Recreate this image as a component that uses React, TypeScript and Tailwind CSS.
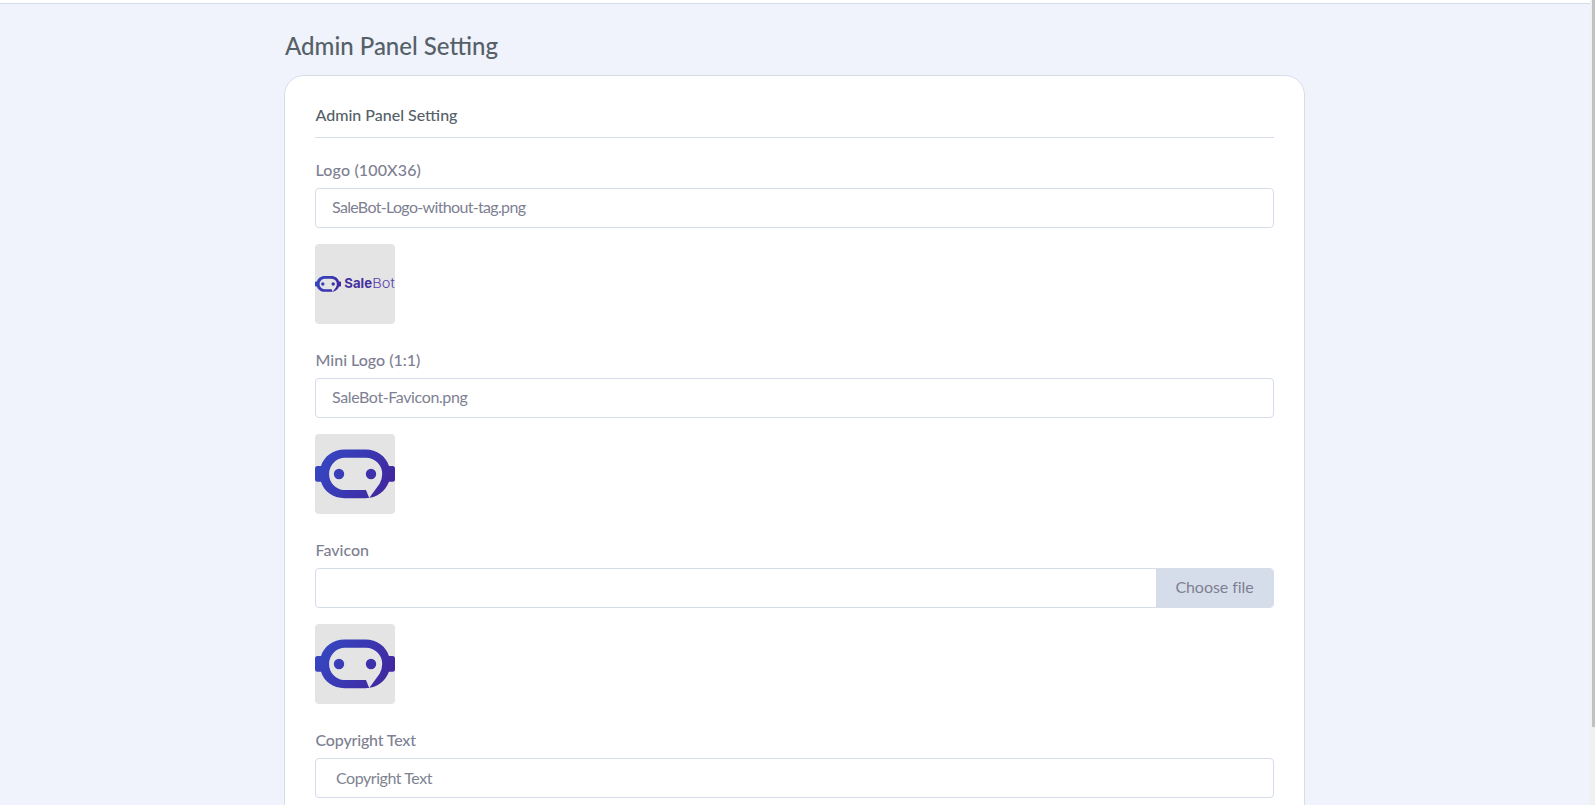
import type { ReactNode } from "react";

function BotShape({ id }: { id: string }) {
  return (
    <>
      <defs>
        <linearGradient id={id} x1="0" y1="20" x2="76" y2="66" gradientUnits="userSpaceOnUse">
          <stop offset="0" stopColor="#3549c3" />
          <stop offset="0.5" stopColor="#3a38b2" />
          <stop offset="1" stopColor="#43239a" />
        </linearGradient>
      </defs>
      <path
        fill={`url(#${id})`}
        fillRule="evenodd"
        d="M29.5 15.5H50.5C62 15.5 71 22.5 74 32H77.5Q80 32 80 34.5V45.3Q80 47.8 77.5 47.8H74C70 57.5 62 64.2 50.5 64.2H29.5C18 64.2 9 57.5 6 47.8H2.5Q0 47.8 0 45.3V34.5Q0 32 2.5 32H6C9 22.5 18 15.5 29.5 15.5ZM29 23.8A16.2 16.2 0 0 0 29 56.1H51L54.2 64L64.6 49.8Q67.2 45 67.2 40A16.2 16.2 0 0 0 51 23.8Z"
      />
      <circle cx="24" cy="40" r="5.2" fill={`url(#${id})`} />
      <circle cx="56" cy="40" r="5.2" fill={`url(#${id})`} />
    </>
  );
}

function BotPreview({ id }: { id: string }) {
  return (
    <svg viewBox="0 0 80 80" className="block size-20 rounded bg-[#e4e4e4]">
      <BotShape id={id} />
    </svg>
  );
}

function LogoPreview() {
  return (
    <div className="flex size-20 items-center overflow-hidden rounded bg-[#e4e4e4]">
      <svg viewBox="0 0 80 80" className="block size-[26px] shrink-0">
        <BotShape id="bot-wordmark" />
      </svg>
      <svg viewBox="0 0 54 20" className="block h-5 w-[54px] shrink-0 font-['Inter',sans-serif] text-[13.5px]">
        <text x="3.3" y="14.2" textLength="27.7" lengthAdjust="spacingAndGlyphs" fontWeight="700" fill="#44309f">
          Sale
        </text>
        <text x="31.3" y="14.2" textLength="22.5" lengthAdjust="spacingAndGlyphs" fontWeight="300" fill="#5a41ab">
          Bot
        </text>
      </svg>
    </div>
  );
}

function Field({ label, children }: { label: ReactNode; children: ReactNode }) {
  return (
    <div className="mb-6">
      <div className="mb-1.5 pl-[0.5px] text-base font-medium leading-6 text-[#7e7f92]">{label}</div>
      {children}
    </div>
  );
}

function FileBox({ children, action }: { children?: ReactNode; action?: ReactNode }) {
  return (
    <div className="mb-4 flex h-10 overflow-hidden rounded border border-[#d6ddea] bg-white text-base leading-6 text-[#7e7f92]">
      <div className="flex-1 px-4 pt-1.5">{children}</div>
      {action}
    </div>
  );
}

export default function App() {
  return (
    <div className="flex h-[805px] overflow-hidden bg-[#f0f3fb] font-['Lato',sans-serif]">
      <div className="min-w-0 flex-1">
        <header className="h-1 border-b border-[#d6ddea] bg-white" />
        <main className="ml-[284px] w-[1021px] pt-[26px]">
          <h1 className="pl-px text-2xl font-medium leading-8 text-[#556068]">Admin Panel Setting</h1>
          <section className="mt-[13px] h-[900px] rounded-[20px] border border-[#d6ddea] bg-white px-[30px] pt-[27px]">
            <h2 className="mb-5 border-b border-[#d6ddea] pb-2.5 pl-[0.5px] text-base font-medium leading-6 text-[#556068]">
              Admin Panel Setting
            </h2>
            <Field label={<span className="tracking-[0.15px]">Logo (100X36)</span>}>
              <FileBox>
                <span className="tracking-[-0.665px]">SaleBot-Logo-without-tag.png</span>
              </FileBox>
              <LogoPreview />
            </Field>
            <Field label="Mini Logo (1:1)">
              <FileBox>
                <span className="tracking-[-0.38px]">SaleBot-Favicon.png</span>
              </FileBox>
              <BotPreview id="bot-mini" />
            </Field>
            <Field label="Favicon">
              <FileBox
                action={
                  <button className="w-[117px] bg-[#d6ddea] pb-[3px] text-center tracking-[-0.06px]">
                    Choose file
                  </button>
                }
              />
              <BotPreview id="bot-favicon" />
            </Field>
            <Field label={<span className="tracking-[-0.17px]">Copyright Text</span>}>
              <input
                type="text"
                placeholder="Copyright Text"
                className="block h-10 w-full rounded border border-[#d6ddea] bg-white px-5 pb-0.5 text-base tracking-[-0.445px] placeholder:text-[#7e8390]"
              />
            </Field>
          </section>
        </main>
      </div>
      <div className="w-[5px] bg-[#f0f0f1] pl-0.5">
        <div className="h-[727px] w-[3px] bg-[#c1c1c1]" />
      </div>
    </div>
  );
}
